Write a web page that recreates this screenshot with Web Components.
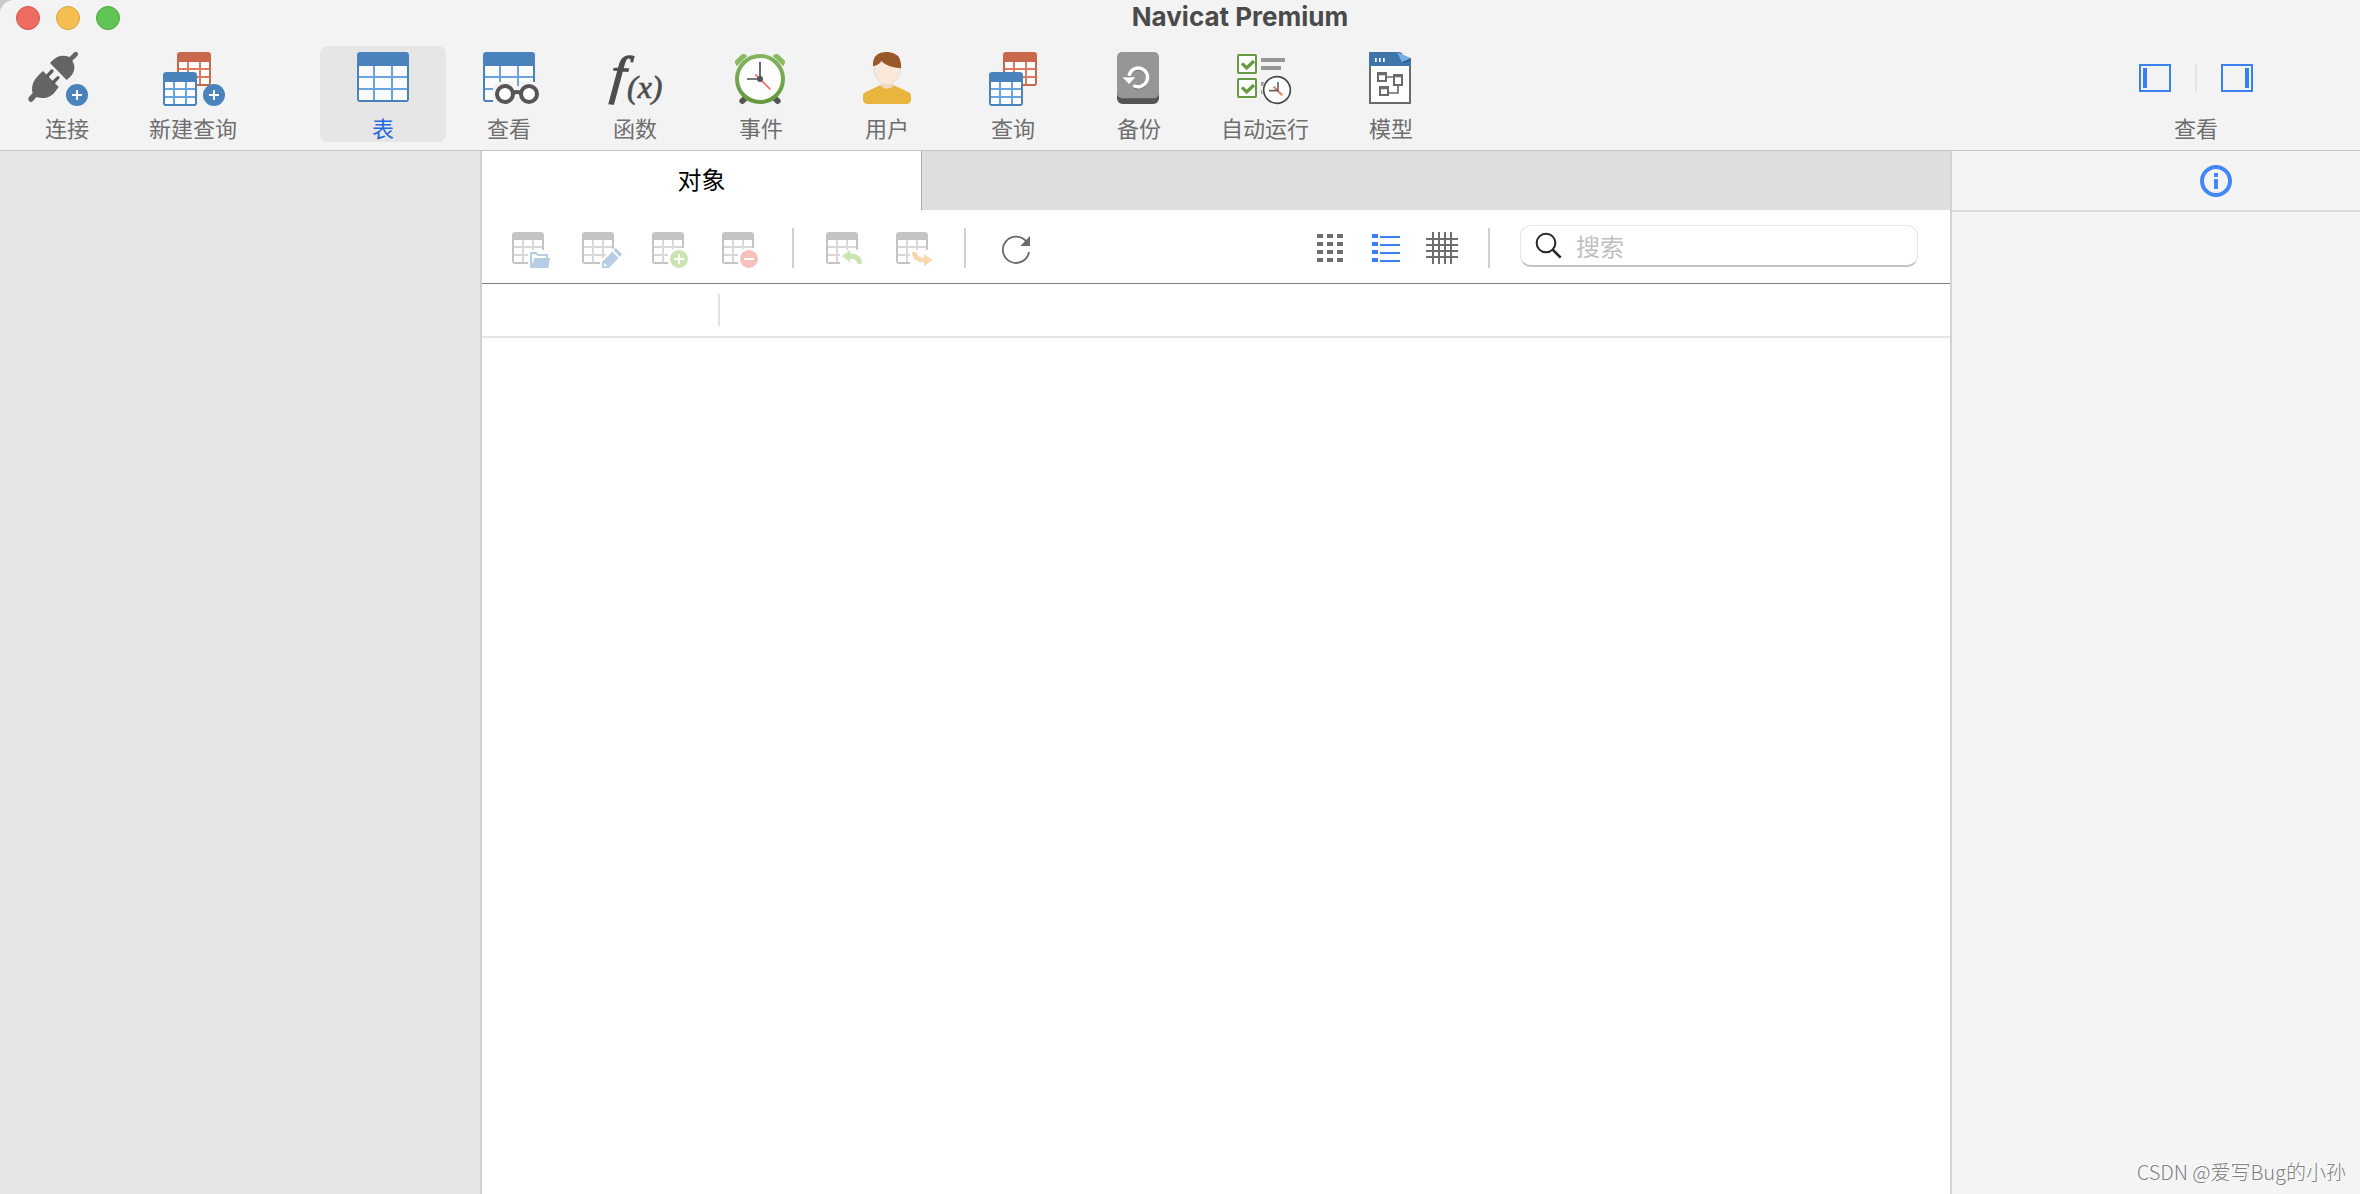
<!DOCTYPE html>
<html lang="zh-CN">
<head>
<meta charset="utf-8">
<title>Navicat Premium</title>
<style>
  html { background: #c9c9c9; }
  body { margin: 0; font-family: Inter, "Noto Sans CJK SC", sans-serif; }
</style>
</head>
<body>
<app-window></app-window>
<script>
/* Draws a small spreadsheet: frame, header band, grid lines and nine cells. */
const sheet = (x, y, w, h, frame, line, cols, rows, cell = '#fff') => {
  const last = cols[2], bottom = rows[2];
  let s = `<rect x="${x}" y="${y}" width="${w}" height="${h}" rx="10" fill="${frame}"/>` +
    `<rect x="${x + cols[0][0]}" y="${y + rows[0][0]}" width="${last[1] - cols[0][0]}" height="${bottom[1] - rows[0][0]}" fill="${line}"/>`;
  for (const [a, b] of cols) for (const [c, d] of rows)
    s += `<rect x="${x + a}" y="${y + c}" width="${b - a}" height="${d - c}" fill="${cell}"/>`;
  return s;
};
const smallCols = [[6, 30], [36, 66], [72, 96]], smallRows = [[30, 48], [54, 72], [78, 96]];
const blueSmall = (x, y) => sheet(x, y, 102, 102, '#4a83bb', '#68a4de', smallCols, smallRows);
const redSmall = (x, y) => sheet(x, y, 102, 102, '#c9674c', '#e07b5e', smallCols, smallRows);
const blueBig = (x, y) => sheet(x, y, 156, 150, '#4a83bb', '#68a4de', [[6, 48], [54, 102], [108, 150]], [[42, 72], [78, 108], [114, 144]], '#fbfbfb');
const greySheet = (x, y) => sheet(x, y, 96, 96, '#c4c4c4', '#d9d9d9', [[6, 30], [36, 60], [66, 90]], [[24, 42], [48, 66], [72, 90]]);
const plusBadge = (x, y) => `<circle cx="${x}" cy="${y}" r="33" fill="#4a83bb"/><path d="M${x - 15} ${y}h30M${x} ${y - 15}v30" stroke="#fff" stroke-width="5.5"/>`;

const icons = {
  connect: ['12 138 378 210', `<g fill="#646464"><path d="M150 189Q168 168 186 167Q200 167 209 171L223 157Q229 153 233 158Q236 163 232 168L217 182Q224 192 223 207Q221 224 200 240Z"/>
    <path d="M129 213L176 261L162 280Q145 296 128 294Q118 294 110 291L99 303Q92 309 87 303Q82 297 87 291L98 279Q94 270 97 257Q99 239 129 213Z"/></g>
    <path d="M135 212L178 255" stroke="#eee" stroke-width="2" stroke-dasharray="3 3"/><path d="M143 227L156 213M161 246L174 233" stroke="#5a5a5a" stroke-width="10" stroke-linecap="round"/>` + plusBadge(231, 285)],
  newQuery: ['390 138 378 210', redSmall(531, 156) + blueSmall(489, 216) + plusBadge(642, 285)],
  table: ['60 48 378 210', blueBig(171, 66)],
  view: ['438 48 378 210', blueBig(549, 66) + `<path d="M579 218V168L592 156H642V168H662V156H712V218Z" fill="#f3f3f3"/>
    <g fill="#fff" stroke="#555" stroke-width="12"><path d="M640 189Q651 183 662 189"/><circle cx="615" cy="192" r="24"/><circle cx="687" cy="192" r="24"/></g>`],
  func: ['36 48 378 210', `<g fill="#4d4d4d" stroke="#4d4d4d" font-family="Liberation Serif, serif" font-style="italic"><text x="152" y="190" font-size="162" stroke-width="4" transform="rotate(5 190 150)">f</text><text x="201" y="203" font-size="96" stroke-width="2">(x)</text></g>`],
  event: ['414 48 378 210', `<defs><linearGradient id="ring" x2="0" y2="1"><stop stop-color="#84b35f"/><stop offset="1" stop-color="#64993f"/></linearGradient></defs>
    <path d="M547 213L556 204M653 213L644 204" stroke="#555" stroke-width="18" stroke-linecap="round"/>
    <path d="M525 98Q524 93 528 89L544 74Q549 70 555 73L562 78L530 109ZM675 98Q676 93 672 89L656 74Q651 70 645 73L638 78L670 109Z" fill="#8aba64"/>
    <circle cx="600" cy="147" r="69" fill="#fdfdfd" stroke="url(#ring)" stroke-width="12"/>
    <path d="M586 133L631 178" stroke="#f0735c" stroke-width="5"/><path d="M600 96V147H561" fill="none" stroke="#4d4d4d" stroke-width="5"/><circle cx="600" cy="147" r="9" fill="#555"/>`],
  user: ['12 48 378 210', `<path d="M129 196Q129 190 136 187L180 166H222L266 187Q273 190 273 197V210Q271 222 259 222H143Q131 222 129 210Z" fill="#e9b53d"/>
    <path d="M183 160H219V169Q211 176 201 176Q191 176 183 169Z" fill="#f1dac5"/>
    <path d="M162 98H240V134L218 160Q201 172 184 160L163 134Z" fill="#fae8d8" stroke="#ddd0c4" stroke-width="2"/>
    <path d="M159 109V100Q161 67 199 66H206Q240 70 243 101V115Q203 113 184 93Q176 106 159 109Z" fill="#985829"/>`],
  query: ['390 48 378 210', redSmall(549, 66) + blueSmall(507, 126)],
  backup: ['-12 138 378 210', `<rect x="111" y="170" width="126" height="142" rx="17" fill="#555"/><rect x="111" y="156" width="126" height="139" rx="15" fill="#969696"/>
    <path d="M146 233A28 28 0 1 1 163 258" transform="translate(0 3)" fill="none" stroke="#777" stroke-width="10"/>
    <path d="M147 228A28 28 0 1 1 160 256" fill="none" stroke="#fff" stroke-width="10"/><path d="M128 232H166L147 252Z" fill="#fff"/>`],
  auto: ['366 138 378 210', `<g fill="#fff" stroke="#689a44" stroke-width="6"><rect x="474" y="165" width="54" height="54" rx="2"/><rect x="474" y="237" width="54" height="54" rx="2"/></g>
    <path d="M486 190L500 204L522 183M486 262L500 276L522 255" fill="none" stroke="#689a44" stroke-width="10"/>
    <path d="M543 180H615M543 204H603M543 252H560M543 276H560" stroke="#969696" stroke-width="12"/>
    <circle cx="591" cy="270" r="45" fill="#f3f3f3"/><circle cx="591" cy="270" r="40" fill="#fff" stroke="#484848" stroke-width="5"/>
    <path d="M581 260L607 286" stroke="#f0735c" stroke-width="6"/><path d="M594 246V272H567" fill="none" stroke="#686868" stroke-width="5"/>`],
  model: ['744 138 378 210', `<rect x="870" y="159" width="120" height="150" fill="#fff" stroke="#6b6b6b" stroke-width="6"/><path d="M950 150H998V176H993Z" fill="#f3f3f3"/><path d="M867 156H951L993 176V198H867Z" fill="#4075aa"/>
    <path d="M951 156L993 175L966 187Z" fill="#75ade8"/><path d="M966 187L993 175V180L972 190Z" fill="#315f8f"/>
    <path d="M885 180H890M897 180H902M909 180H914" stroke="#fff" stroke-width="12"/>
    <path d="M918 231H942M927 279H954V258" fill="none" stroke="#6b6b6b" stroke-width="5"/>
    <g fill="#fff" stroke="#6b6b6b" stroke-width="6"><path d="M894 219H918V243H894ZM942 225H966V255H942ZM900 261H924V285H900Z"/></g>
    <path d="M891 221H921M939 227H969M897 263H927" stroke="#6b6b6b" stroke-width="10"/>`],
  leftPane: ['237 102 96 84', `<rect x="240" y="105" width="90" height="78" fill="none" stroke="#3a80f5" stroke-width="6"/><path d="M249 114h12v60h-12z" fill="#3a80f5"/>`],
  rightPane: ['483 102 96 84', `<rect x="486" y="105" width="90" height="78" fill="none" stroke="#3a80f5" stroke-width="6"/><path d="M555 114h12v60h-12z" fill="#3a80f5"/>`],
  info: ['420 402 96 96', `<circle cx="468" cy="450" r="42" fill="none" stroke="#4287f5" stroke-width="12"/><path d="M462 426h12v12h-12zM462 444h12v30h-12z" fill="#4287f5"/>`],
  open: ['126 264 120 120', greySheet(126, 276) + `<path d="M174 384V330H246V384Z" fill="#fff"/><path d="M180 384V340Q180 336 184 336H200L205 342H234V354H240L235 384Z" fill="#b7cde4"/><path d="M186 357V343H198L203 348H228V354H194L187 372Z" fill="#fff"/>`],
  edit: ['336 264 120 120', greySheet(336, 276) + `<path d="M390 384V360L406 350V345L424 326H456V384Z" fill="#fff"/><path d="M396 366L427 335L446 354L416 384H396ZM431 331L437 324L456 342L449 350Z" fill="#b7cde4"/><path d="M402 369L413 378H402Z" fill="#fff"/>`],
  add: ['546 264 120 120', greySheet(546, 276) + `<path d="M594 384V342L607 330L612 324H666V384Z" fill="#fff"/><circle cx="627" cy="357" r="27" fill="#c8e5b2"/><path d="M612 357H642M627 342V372" stroke="#fff" stroke-width="6"/>`],
  remove: ['756 264 120 120', greySheet(756, 276) + `<path d="M804 384V342L817 330L822 324H876V384Z" fill="#fff"/><circle cx="837" cy="357" r="27" fill="#f6c0bb"/><path d="M822 357H852" stroke="#fff" stroke-width="6"/>`],
  importData: ['132 84 120 120', greySheet(138, 96) + `<path d="M180 193V160L200 149H240V193Z" fill="#fff"/><path d="M186 168L210 149V160Q246 161 246 192H233Q231 176 210 176V187Z" fill="#c8e5b2"/>`],
  exportData: ['342 84 120 120', greySheet(348, 96) + `<path d="M390 193V150H450V193Z" fill="#fff"/><path d="M396 156H409Q412 173 432 174V162L457 180L432 199V187Q397 187 396 156Z" fill="#f9d6a9"/>`],
  refresh: ['648 84 120 120', `<path d="M740 126A39.500 39.500 0 1 0 747 156" fill="none" stroke="#6b6b6b" stroke-width="5.500"/><path d="M750 108V138H721Z" fill="#6b6b6b"/>`],
  tiles: ['48 84 120 120', `<path d="M81 108h78M81 132h78M81 156h78M81 180h78" stroke="#6e6e6e" stroke-width="12" stroke-dasharray="18 12"/>`],
  list: ['216 84 120 120', `<path d="M246 108h18M246 132h18M246 156h18M246 180h18" stroke="#3a80f5" stroke-width="12"/><path d="M270 111h60M270 135h60M270 159h60M270 183h60" stroke="#3a80f5" stroke-width="6"/>`],
  grid: ['384 84 120 120', `<path d="M408 117h96M408 135h96M408 153h96M408 171h96M429 96v96M447 96v96M465 96v96M483 96v96" stroke="#6e6e6e" stroke-width="6"/>`],
  search: ['105 99 81 81', `<circle cx="138" cy="132" r="28" fill="none" stroke="#262626" stroke-width="6"/><path d="M158 152L182 176" stroke="#262626" stroke-width="8"/>`]
};

const define = (name, html, setup) => customElements.define(name, class extends HTMLElement {
  constructor() {
    super();
    const t = document.createElement('template');
    t.innerHTML = html;
    this.attachShadow({ mode: 'open' }).append(t.content.cloneNode(true));
  }
  connectedCallback() { if (setup) setup(this, this.shadowRoot); }
});

define('nav-icon', `<style>:host{display:block}svg{display:block;width:100%;height:100%;overflow:visible}</style><svg aria-hidden="true"></svg>`, (el, root) => {
  const [box, art] = icons[el.getAttribute('name')];
  const svg = root.querySelector('svg');
  svg.setAttribute('viewBox', box);
  svg.innerHTML = art;
});

define('title-bar', `<style>
  :host{display:flex;height:36px;align-items:center;padding:0 0 0 16px}
  .lights{display:flex;gap:16px}
  button{width:24px;height:24px;padding:0;border-radius:50%;border:1px solid #d5524a;background:#ed6b60}
  button:nth-child(2){background:#f5bf50;border-color:#d9a23c}
  button:nth-child(3){background:#61c454;border-color:#4aa63c}
  h1{flex:1;margin:0;font-size:26px;line-height:34px;font-weight:700;color:#4a4a4a;text-align:center;align-self:flex-start}
</style>
<div class="lights"><button aria-label="关闭"></button><button aria-label="最小化"></button><button aria-label="缩放"></button></div>
<h1><slot></slot></h1>`);

define('tool-item', `<style>
  :host{display:block;width:126px;flex:none}
  button{display:block;width:100%;border:0;padding:0;border-radius:8px;background:none;font:inherit;font-size:22px;line-height:26px;color:#6e6e6e}
  nav-icon{height:70px}
  :host([selected]) button{background:#e6e6e6;color:#2468e2}
</style><button><slot></slot></button>`, (el, root) => {
  if (root.querySelector('nav-icon')) return;
  const icon = document.createElement('nav-icon');
  icon.setAttribute('name', el.getAttribute('icon'));
  root.querySelector('button').prepend(icon);
});

define('pane-switch', `<style>
  :host{display:block;width:126px;font-size:22px;line-height:26px;color:#6e6e6e;text-align:center}
  .row{display:flex;justify-content:center;gap:24px;padding:18px 0 24px}
  button{width:32px;height:28px;padding:0;border:0;background:none}
  nav-icon{height:28px}
  i{width:2px;background:#e3e3e3}
</style><div class="row"><button aria-label="左侧窗格"><nav-icon name="leftPane"></nav-icon></button><i></i><button aria-label="右侧窗格"><nav-icon name="rightPane"></nav-icon></button></div><slot></slot>`);

define('main-toolbar', `<style>
  :host{display:flex;justify-content:space-between;padding:10px 101px 8px 4px}
  div{display:flex}
  .objects{margin-left:64px}
</style>
<div><tool-item icon="connect">连接</tool-item><tool-item icon="newQuery">新建查询</tool-item>
<div class="objects"><tool-item icon="table" selected>表</tool-item><tool-item icon="view">查看</tool-item><tool-item icon="func">函数</tool-item><tool-item icon="event">事件</tool-item><tool-item icon="user">用户</tool-item><tool-item icon="query">查询</tool-item><tool-item icon="backup">备份</tool-item><tool-item icon="auto">自动运行</tool-item><tool-item icon="model">模型</tool-item></div></div>
<pane-switch>查看</pane-switch>`);

define('tab-strip', `<style>
  :host{display:flex;height:59px;background:#dedede}
  button{width:440px;border:0;border-right:1px solid #aaa;background:#fff;padding:0 0 4px;font:inherit;font-size:24px;color:#000}
</style><button role="tab" aria-selected="true"><slot></slot></button>`);

define('search-field', `<style>
  :host{display:block}
  label{display:flex;align-items:center;height:42px;box-sizing:border-box;padding:0 14px;gap:14px;border:1px solid #e6e6e6;border-bottom:2px solid #c4c4c4;border-radius:11px;background:#fff}
  nav-icon{width:27px;height:27px;flex:none}
  input{flex:1;min-width:0;border:0;outline:0;padding:3px 0 0;background:none;font:inherit;font-size:24px;color:#222}
  input::placeholder{color:#bfbfbf;opacity:1}
</style><label><nav-icon name="search"></nav-icon><input type="text" placeholder="搜索" aria-label="搜索"></label>`);

define('object-toolbar', `<style>
  :host{display:flex;justify-content:space-between;box-sizing:border-box;height:74px;padding:3px 32px 0 30px;border-bottom:1px solid #808080}
  div{display:flex;align-items:center;gap:30px}
  .views{gap:16px}
  button{width:40px;height:40px;padding:0;border:0;background:none}
  nav-icon{height:40px}
  i{width:2px;height:40px;background:#d0d0d0}
  search-field{width:398px;margin-bottom:4px}
</style>
<div>
<button disabled aria-label="打开表"><nav-icon name="open"></nav-icon></button><button disabled aria-label="设计表"><nav-icon name="edit"></nav-icon></button><button disabled aria-label="新建表"><nav-icon name="add"></nav-icon></button><button disabled aria-label="删除表"><nav-icon name="remove"></nav-icon></button><i></i>
<button disabled aria-label="导入"><nav-icon name="importData"></nav-icon></button><button disabled aria-label="导出"><nav-icon name="exportData"></nav-icon></button><i></i>
<button aria-label="刷新"><nav-icon name="refresh"></nav-icon></button>
</div>
<div><div class="views"><button aria-label="图标"><nav-icon name="tiles"></nav-icon></button><button aria-label="列表"><nav-icon name="list"></nav-icon></button><button aria-label="网格"><nav-icon name="grid"></nav-icon></button></div><i></i><search-field></search-field></div>`);

define('column-header', `<style>
  :host{display:flex;padding:10px 0;border-bottom:2px solid #e5e5e5}
  span{width:236px;height:32px;border-right:2px solid #e2e2e2}
</style><span></span>`);

define('info-pane', `<style>
  :host{display:block;width:408px;flex:none;background:#f4f4f4;border-left:2px solid #d3d3d3}
  header{display:flex;justify-content:flex-end;align-items:center;height:59px;padding-right:128px;border-bottom:2px solid #d9d9d9}
  button{width:32px;height:32px;padding:0;border:0;background:none}
  nav-icon{height:32px}
</style><header><button aria-label="信息"><nav-icon name="info"></nav-icon></button></header>`);

define('app-window', `<style>
  :host{display:flex;flex-direction:column;min-height:100vh;position:relative;background:#f3f3f3;border-top-left-radius:14px;overflow:hidden}
  .top{border-bottom:1px solid #c4c4c4}
  .body{flex:1;display:flex}
  aside{width:480px;flex:none;background:#e5e5e5;border-right:2px solid #d0d0d0}
  main{flex:1;min-width:0;background:#fff}
  .mark{position:absolute;right:14px;bottom:8px;font-family:"Noto Sans CJK SC",sans-serif;font-weight:300;font-size:20px;line-height:28px;color:#808080;text-shadow:-1px -1px 0 #fff}
</style>
<div class="top"><title-bar>Navicat Premium</title-bar><main-toolbar></main-toolbar></div>
<div class="body"><aside></aside>
<main><tab-strip>对象</tab-strip><object-toolbar></object-toolbar><column-header></column-header></main>
<info-pane></info-pane></div>
<div class="mark">CSDN @爱写Bug的小孙</div>`);
</script>
</body>
</html>
